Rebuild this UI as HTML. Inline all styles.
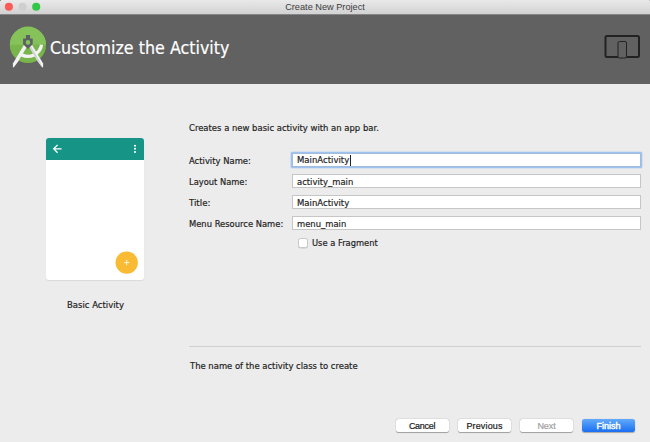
<!DOCTYPE html>
<html><head><meta charset="utf-8"><title>Create New Project</title>
<style>
html,body{margin:0;padding:0;}
body{width:650px;height:442px;overflow:hidden;background:#ececec;position:relative;font-family:"DejaVu Sans","Liberation Sans",sans-serif;color:#1e1e1e;}
.abs{position:absolute;white-space:nowrap;}
#titlebar{left:0;top:0;width:650px;height:15px;background:linear-gradient(#e9e9e9,#d2d2d2);border-bottom:1px solid #868686;box-sizing:border-box;}
#title{left:0;width:650px;text-align:center;top:1px;font:9.2px/12px "Liberation Sans",sans-serif;color:#3c3c3c;}
.tl{width:8px;height:8px;border-radius:50%;top:3px;}
#header{left:0;top:15px;width:650px;height:69px;background:#616161;}
#h1{left:49.5px;top:36.7px;font-size:17px;line-height:22px;color:#fff;transform:scaleX(0.937);transform-origin:0 0;-webkit-text-stroke:0.2px #fff;}
.lbl{font-size:9px;line-height:12px;left:189px;-webkit-text-stroke:0.2px #1e1e1e;transform-origin:0 0;}
.inp{left:292px;width:349px;height:14px;box-sizing:border-box;border:1px solid #c6c6c6;background:#fff;}
.val{font-size:9px;line-height:12px;left:296.5px;-webkit-text-stroke:0.2px #1e1e1e;transform-origin:0 0;}
.btn{top:419px;height:13px;width:53px;border-radius:2.5px;background:#fff;box-shadow:0 0.5px 0.8px rgba(0,0,0,.3),0 0 0 0.5px rgba(0,0,0,.07);font:9px/14.6px "Liberation Sans",sans-serif;text-align:center;color:#1a1a1a;-webkit-text-stroke:0.2px currentColor;}
</style></head><body>
<div id="titlebar" class="abs"></div>
<svg class="abs" style="left:0;top:0" width="50" height="14" viewBox="0 0 50 14">
 <circle cx="8.9" cy="6.8" r="4.05" fill="#fc5b57"/><circle cx="22.5" cy="6.8" r="4.05" fill="#cfcfcf"/><circle cx="36.2" cy="6.8" r="4.05" fill="#33c748"/>
</svg>
<div class="abs" style="left:0;top:0;width:1px;height:1px;background:#8c8c8c"></div><div class="abs" style="left:649px;top:0;width:1px;height:1px;background:#c4c4c4"></div>
<div id="title" class="abs">Create New Project</div>
<div id="header" class="abs"></div>
<svg class="abs" style="left:0;top:14px" width="60" height="69" viewBox="0 14 60 69">
 <circle cx="27.9" cy="45" r="18.1" fill="#78b64b"/>
 <path d="M9.8 44.7 A18.1 18.1 0 0 1 46 44.7 Z" fill="#86c25a"/>
 <path d="M30 38.5 L33 41 L44.5 52.5 A18.1 18.1 0 0 0 46 44.7 L38 44.7 Z" fill="#70ab45" opacity="0.55"/>
 <path d="M41.6 44.8 A14 14 0 0 1 21.4 54.8" fill="none" stroke="#f3f3f3" stroke-width="3.3"/>
 <path d="M24.5 44 L28.6 44 L18.2 61.5 L13.7 67.4 L12.9 66.9 L12.9 63.4 Z" fill="#f3f3f3"/>
 <path d="M31.5 44 L27.4 44 L37.8 61.5 L42.3 67.4 L43.1 66.9 L43.1 63.4 Z" fill="#f3f3f3"/>
 <path d="M27.4 44 L29.6 44 L39.4 60.5 L42.3 67.4 L37.8 61.5 Z" fill="#d2d4d3"/>
 <path d="M25.9 35 h4.2 v3.4 h2.6 v5.8 L28 49.1 L23.1 44.2 v-5.8 h2.8 z" fill="#5c6063"/>
 <circle cx="28" cy="42.4" r="2.3" fill="#86c25a"/>
</svg>
<div id="h1" class="abs">Customize the Activity</div>
<svg class="abs" style="left:603px;top:33px" width="40" height="28" viewBox="0 0 40 28">
 <rect x="2.5" y="3" width="33.5" height="21" rx="1.5" fill="none" stroke="#222" stroke-width="2"/>
 <rect x="15" y="8.5" width="8.5" height="16.5" rx="1.5" fill="#616161" stroke="#222" stroke-width="1"/>
</svg>

<!-- phone preview -->
<div class="abs" style="left:46px;top:138px;width:98px;height:141.5px;background:#fff;border-radius:3px;overflow:hidden;box-shadow:0 0.5px 1px rgba(0,0,0,.08);">
 <div style="height:21.5px;background:#169586;"></div>
</div>
<svg class="abs" style="left:46px;top:138px" width="98" height="142" viewBox="0 0 98 142">
 <path d="M15.6 10.8 H8 M11.6 6.9 L7.7 10.8 L11.6 14.7" fill="none" stroke="#fff" stroke-width="1.3"/>
 <circle cx="89" cy="7.7" r="1.05" fill="#fff"/><circle cx="89" cy="10.8" r="1.05" fill="#fff"/><circle cx="89" cy="14" r="1.05" fill="#fff"/>
 <circle cx="80.7" cy="124.6" r="11.2" fill="#f9bb33"/>
 <path d="M78 124.6 h5.4 M80.7 121.9 v5.4" stroke="#fff" stroke-width="0.8"/>
</svg>
<div id="basic" class="abs lbl" style="left:66.5px;top:299px;transform:scaleX(0.944)">Basic Activity</div>

<div id="creates" class="abs lbl" style="top:121.5px;transform:scaleX(0.938)">Creates a new basic activity with an app bar.</div>

<div id="l1" class="abs lbl" style="top:154.5px;transform:scaleX(0.936)">Activity Name:</div>
<div id="l2" class="abs lbl" style="top:175.5px;transform:scaleX(0.924)">Layout Name:</div>
<div id="l3" class="abs lbl" style="top:196.5px;transform:scaleX(0.955)">Title:</div>
<div id="l4" class="abs lbl" style="top:217.5px;transform:scaleX(0.930)">Menu Resource Name:</div>

<div class="abs inp" style="top:153px;border-color:#a3bcdc;border-radius:0.5px;box-shadow:0 0 0 1px #9fc3f1,0 0 0.5px 1.6px rgba(160,196,242,.55);"></div>
<div class="abs inp" style="top:174px"></div>
<div class="abs inp" style="top:195px"></div>
<div class="abs inp" style="top:216px"></div>
<div id="v1" class="abs val" style="top:154px;transform:scaleX(0.946)">MainActivity</div>
<div class="abs" style="left:349.5px;top:154.5px;width:1px;height:11px;background:#222;"></div>
<div id="v2" class="abs val" style="top:175.5px;transform:scaleX(0.935)">activity_main</div>
<div id="v3" class="abs val" style="top:196.5px;transform:scaleX(0.946)">MainActivity</div>
<div id="v4" class="abs val" style="top:217.5px;transform:scaleX(0.934)">menu_main</div>

<div class="abs" style="left:297.5px;top:238px;width:10px;height:10px;box-sizing:border-box;border-radius:2.5px;background:#fff;border:0.5px solid #c8c8c8;box-shadow:0 0.5px 0.5px rgba(0,0,0,.15);"></div>
<div id="frag" class="abs lbl" style="left:312px;top:236.5px;transform:scaleX(0.925)">Use a Fragment</div>

<div class="abs" style="left:189px;top:346px;width:452px;height:1px;background:#d0d0d0;"></div>
<div id="desc" class="abs lbl" style="left:189.5px;top:359.5px;transform:scaleX(0.937)">The name of the activity class to create</div>

<div id="b1" class="abs btn" style="left:395.5px;letter-spacing:-0.3px">Cancel</div>
<div id="b2" class="abs btn" style="left:458px;letter-spacing:0.14px">Previous</div>
<div id="b3" class="abs btn" style="left:520px;color:#a0a0a0;letter-spacing:-0.1px">Next</div>
<div id="b4" class="abs btn" style="left:582px;color:#fff;background:linear-gradient(#63aaf9,#1a6ff2);-webkit-text-stroke:0.45px #fff;box-shadow:0 0.5px 1px rgba(0,0,0,.3);letter-spacing:0.02px">Finish</div>
</body></html>
